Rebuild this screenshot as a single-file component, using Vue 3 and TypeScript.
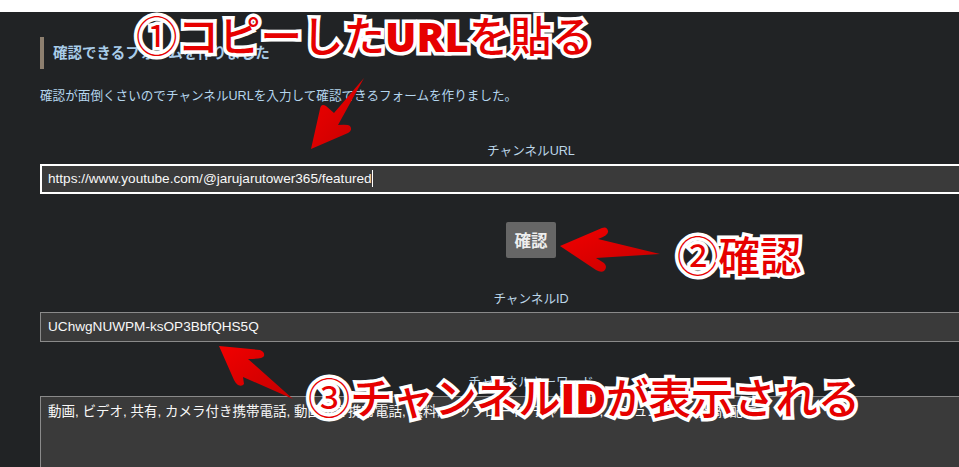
<script setup lang="ts">
const url = 'https://www.youtube.com/@jarujarutower365/featured'
const channelId = 'UChwgNUWPM-ksOP3BbfQHS5Q'
const keywords = '動画, ビデオ, 共有, カメラ付き携帯電話, 動画付き携帯電話, 無料, アップロード, チャンネル, コミュニティ, 投稿, 配信'
</script>

<template>
  <div class="page">
    <div class="topbar"></div>
    <main class="main">
      <h3 class="heading">確認できるフォームを作りました</h3>
      <p class="lead">確認が面倒くさいのでチャンネルURLを入力して確認できるフォームを作りました。</p>

      <label class="label label-url">チャンネルURL</label>
      <div class="field focused">{{ url }}<span class="caret"></span></div>

      <div class="actions"><button class="btn" type="button">確認</button></div>

      <label class="label label-id">チャンネルID</label>
      <div class="field">{{ channelId }}</div>

      <label class="label label-kw">チャンネルキーワード</label>
      <div class="field area">{{ keywords }}</div>
    </main>

    <svg class="arrows" viewBox="0 0 959 467" width="959" height="467" aria-hidden="true">
      <defs>
        <linearGradient id="red" x1="0" y1="0" x2="1" y2="1">
          <stop offset="0" stop-color="#f20000" />
          <stop offset="1" stop-color="#c40000" />
        </linearGradient>
      </defs>
      <path fill="url(#red)" d="M364 78 L334 113 L326 106 Q321 103 320 109 L311 149 L348 133 Q353 130 350 126 Q348 124 338 125 Z" />
      <path fill="url(#red)" d="M560 246 L602 228 Q607 226 608 231 Q609 235 598 239 L660 254 L596 258 L604 263 Q608 267 604 271 Q601 273 596 270 Z" />
      <path fill="url(#red)" d="M219 346 L260 350 Q265 352 264 356 Q263 359 248 359 L293 399 L243 377 L244 384 Q242 387 238 385 Q236 384 234 380 Z" />
    </svg>

    <div class="note note-1"><span class="mark">①</span>コピーした<b class="latin">URL</b>を貼る</div>
    <div class="note note-2"><span class="mark">②</span>確認</div>
    <div class="note note-3"><span class="mark">③</span>チャンネル<b class="latin">ID</b>が表示される</div>
  </div>
</template>

<style>
html, body { margin: 0; background: #fff; overflow: hidden; }
</style>

<style scoped>
.page {
  position: relative;
  width: 959px;
  height: 467px;
  overflow: hidden;
  display: flex;
  flex-direction: column;
  background: #212325;
  font-family: "Liberation Sans", "Noto Sans CJK JP", sans-serif;
  color: #bcd6e8;
}
.topbar { height: 12px; flex: none; background: #fff; }
.main {
  flex: none;
  width: 982px;
  padding: 25px 0 0 40px;
  display: flex;
  flex-direction: column;
}
.heading {
  margin: 0;
  height: 32px;
  line-height: 32px;
  padding-left: 9px;
  border-left: 4px solid #8d7f6f;
  font-size: 14.5px;
  font-weight: 700;
  color: #a9cdea;
}
.lead { margin: 17px 0 0; font-size: 12.6px; line-height: 20px; color: #b5d6ee; }
.label { display: block; text-align: center; font-size: 12.6px; line-height: 18px; }
.label-url { margin-top: 36px; }
.label-id { margin-top: 32px; }
.label-kw { margin-top: 31px; }
.field {
  box-sizing: border-box;
  height: 30px;
  margin-top: 4px;
  padding: 0 7px;
  border: 1px solid #8a8a8a;
  background: #3a3a3a;
  color: #f8f8f8;
  font-size: 13.6px;
  line-height: 28px;
  white-space: nowrap;
  overflow: hidden;
}
.focused { border: 2px solid #fff; line-height: 26px; padding: 0 6px; }
.caret { display: inline-block; width: 1px; height: 17px; background: #fff; vertical-align: -4px; }
.area { height: 90px; font-size: 13.5px; line-height: 30px; margin-top: 5px; }
.actions { display: flex; justify-content: center; margin-top: 28px; }
.btn {
  width: 50px;
  height: 36px;
  padding: 0;
  border: 0;
  border-radius: 2px;
  background: #666;
  color: #eee;
  font: 700 16.5px "Liberation Sans", "Noto Sans CJK JP", sans-serif;
}
.arrows { position: absolute; left: 0; top: 0; pointer-events: none; }
.note {
  position: absolute;
  white-space: nowrap;
  font-weight: 500;
  font-size: 41.5px;
  line-height: 50px;
  color: #e60000;
  font-family: "Noto Sans CJK JP", sans-serif;
  -webkit-text-stroke: 7px #fff;
  paint-order: stroke fill;
}
.mark { font-weight: 400; }
.latin { font-weight: 800; font-family: "Open Sans", "Noto Sans CJK JP", sans-serif; }
.note-1 { left: 136px; top: 9px; }
.note-2 { left: 677px; top: 229px; }
.note-3 { left: 308px; top: 371px; font-size: 42.3px; }
</style>
